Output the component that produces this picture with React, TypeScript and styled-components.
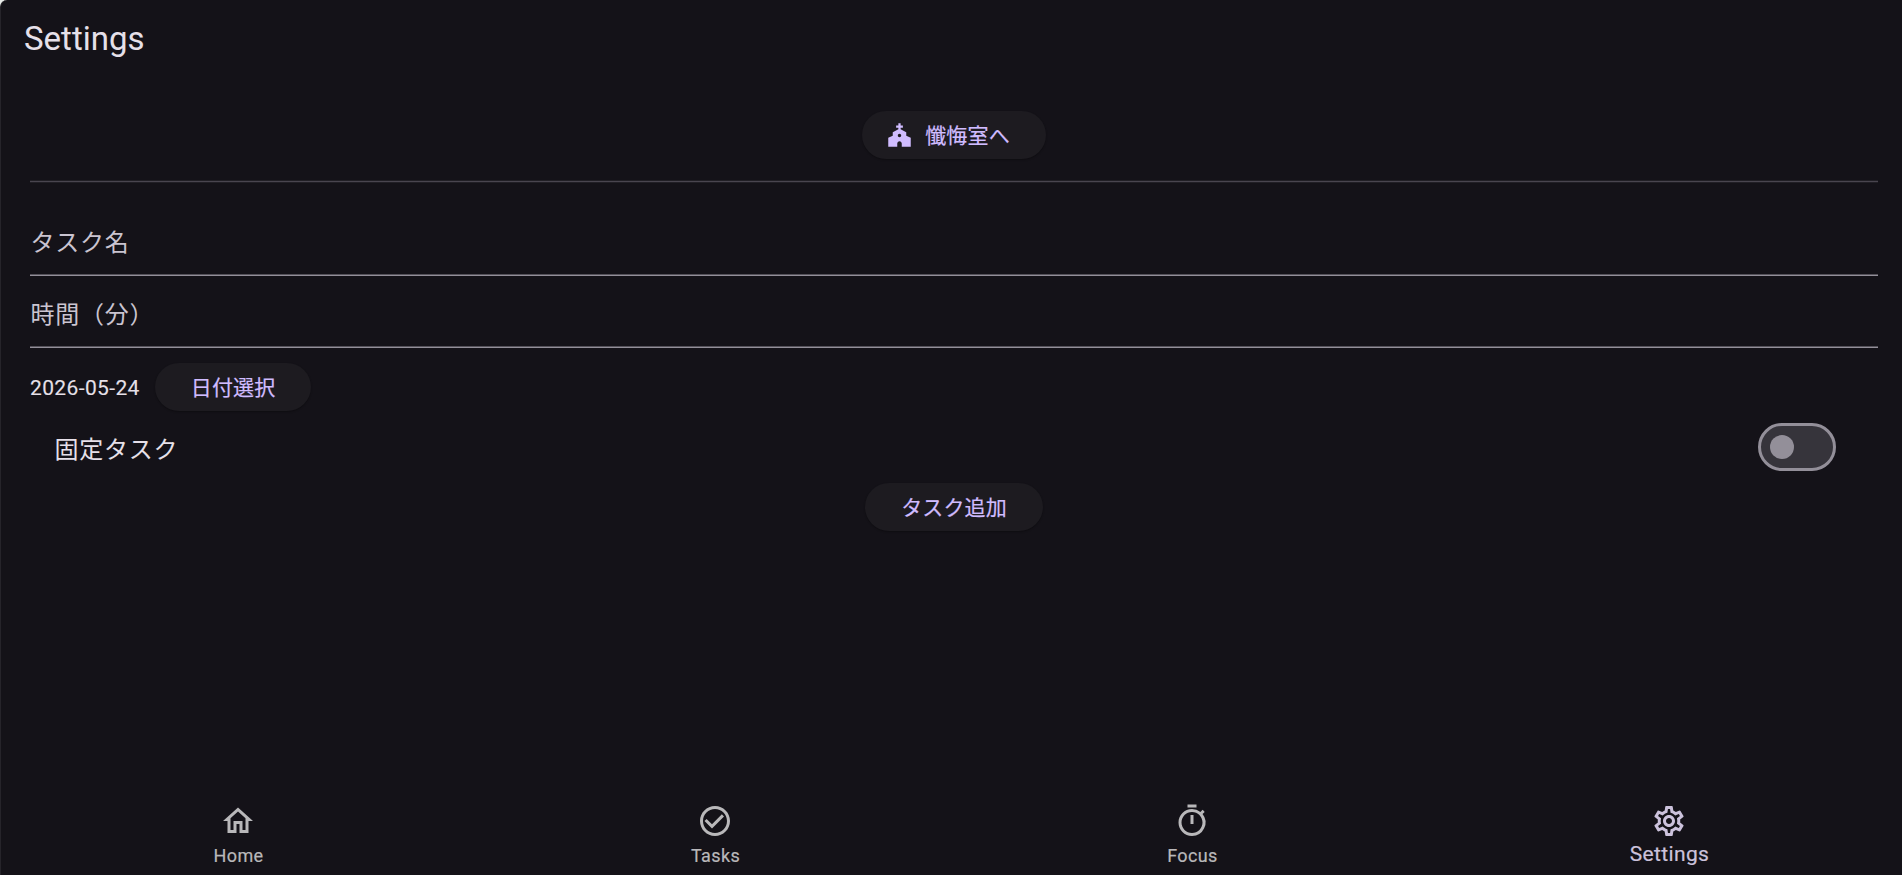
import React, { useState } from "react";
import styled, { createGlobalStyle } from "styled-components";
import { IconType } from "react-icons";
import {
  MdCheckCircleOutline,
  MdChurch,
  MdOutlineHome,
  MdOutlineSettings,
  MdOutlineTimer,
} from "react-icons/md";

const Colors = {
  surface: "#141218",
  surfaceLow: "#1d1b20",
  text: "#e6e0e9",
  textVariant: "#cac4d0",
  primary: "#d0bcff",
  outline: "#938f99",
  outlineSoft: "#545159",
  outlineVariant: "#49454f",
  outlineVariantSoft: "#211f25",
  track: "#36343b",
  edge: "#26242a",
  navIdle: "#b9b8ba",
  navActive: "#ccc2dc",
};

interface Tab {
  label: string;
  icon: IconType;
}

const tabs: Tab[] = [
  { label: "Home", icon: MdOutlineHome },
  { label: "Tasks", icon: MdCheckCircleOutline },
  { label: "Focus", icon: MdOutlineTimer },
  { label: "Settings", icon: MdOutlineSettings },
];

const App: React.FC = () => {
  const [active, setActive] = useState("Settings");
  const [fixed, setFixed] = useState(false);

  return (
    <>
      <GlobalStyle />
      <Window>
        <Screen>
          <AppBar>Settings</AppBar>

          <Content>
            <CenterRow>
              <PillButton $icon>
                <MdChurch size={27} />
                <PillText>懺悔室へ</PillText>
              </PillButton>
            </CenterRow>

            <Divider />

            <Field placeholder="タスク名" />
            <Field placeholder="時間（分）" />

            <DateRow>
              <DateText>2026-05-24</DateText>
              <PillButton>
                <PillText>日付選択</PillText>
              </PillButton>
            </DateRow>

            <SwitchRow>
              <SwitchLabel>固定タスク</SwitchLabel>
              <Switch $on={fixed} onClick={() => setFixed(!fixed)}>
                <Thumb />
              </Switch>
            </SwitchRow>

            <CenterRow>
              <PillButton>
                <PillText>タスク追加</PillText>
              </PillButton>
            </CenterRow>
          </Content>

          <NavBar>
            {tabs.map(({ label, icon: Icon }) => (
              <NavItem key={label} $active={label === active} onClick={() => setActive(label)}>
                <Icon size={36} />
                <NavLabel $active={label === active}>{label}</NavLabel>
              </NavItem>
            ))}
          </NavBar>
        </Screen>
      </Window>
    </>
  );
};

export default App;

const GlobalStyle = createGlobalStyle`
  * {
    box-sizing: border-box;
  }

  body {
    margin: 0;
    background-color: #e8ebe8;
    font-family: Roboto, "Noto Sans CJK JP", sans-serif;
    color: ${Colors.text};
  }

  button, input {
    font-family: inherit;
  }
`;

const Window = styled.div`
  height: 100vh;
  overflow: hidden;
  background-color: ${Colors.surface};
  border-left: 1px solid ${Colors.edge};
  border-top-left-radius: 7px;
`;

const Screen = styled.div`
  display: flex;
  flex-direction: column;
  width: 1908px;
  height: 100%;
  margin-left: -1px;
`;

const AppBar = styled.header`
  height: 84px;
  padding: 18px 24px 0;
  font-size: 33px;
  line-height: 42px;
`;

const Content = styled.main`
  display: flex;
  flex-direction: column;
  flex: 1;
  padding: 27px 30px 0;
`;

const CenterRow = styled.div`
  display: flex;
  justify-content: center;
`;

const PillButton = styled.button<{ $icon?: boolean }>`
  display: flex;
  align-items: center;
  gap: 12px;
  height: 48px;
  padding: ${({ $icon }) => ($icon ? "0 36px 0 24px" : "0 36px")};
  border: 0;
  border-radius: 24px;
  background-color: ${Colors.surfaceLow};
  box-shadow: 0 1px 2px rgba(0, 0, 0, 0.3);
  color: ${Colors.primary};
`;

const PillText = styled.span`
  padding-top: 2px;
  font-size: 21px;
  line-height: 30px;
  letter-spacing: 0.15px;
  -webkit-text-stroke: 0.2px;
`;

const Divider = styled.div`
  height: 1px;
  margin: 22px 0;
  background-color: ${Colors.outlineVariant};
  box-shadow: 0 -1px ${Colors.outlineVariantSoft}, 0 1px ${Colors.outlineVariantSoft};
`;

const Field = styled.input`
  height: 72px;
  padding: 7px 0 0 0.5px;
  border: 0;
  border-bottom: 1px solid ${Colors.outline};
  outline: 0;
  background: transparent;
  box-shadow: inset 0 -1px ${Colors.outlineSoft};
  color: ${Colors.text};
  font-size: 24px;
  letter-spacing: 0.75px;

  &::placeholder {
    color: ${Colors.textVariant};
    opacity: 1;
  }
`;

const DateRow = styled.div`
  display: flex;
  align-items: center;
  gap: 15px;
  margin-top: 15px;
`;

const DateText = styled.span`
  padding-top: 2px;
  font-size: 21px;
  letter-spacing: 0.375px;
  -webkit-text-stroke: 0.1px;
`;

const SwitchRow = styled.div`
  display: flex;
  align-items: center;
  justify-content: space-between;
  height: 72px;
  padding: 0 42px 0 24.5px;
`;

const SwitchLabel = styled.span`
  font-size: 24px;
  letter-spacing: 0.75px;
`;

const Switch = styled.button<{ $on: boolean }>`
  display: flex;
  align-items: center;
  justify-content: ${({ $on }) => ($on ? "flex-end" : "flex-start")};
  width: 78px;
  height: 48px;
  padding: 0 9px;
  border: 3px solid ${Colors.outline};
  border-radius: 24px;
  background-color: ${Colors.track};
`;

const Thumb = styled.div`
  width: 24px;
  height: 24px;
  border-radius: 50%;
  background-color: ${Colors.outline};
`;

const NavBar = styled.nav`
  display: grid;
  grid-template-columns: repeat(4, 1fr);
  height: 84px;
`;

const NavItem = styled.button<{ $active: boolean }>`
  display: flex;
  flex-direction: column;
  align-items: center;
  padding: 12px 0.5px 0 0;
  border: 0;
  background: transparent;
  color: ${({ $active }) => ($active ? Colors.navActive : Colors.navIdle)};
`;

const NavLabel = styled.span<{ $active: boolean }>`
  margin-top: ${({ $active }) => ($active ? "1px" : "4px")};
  padding-left: 0.5px;
  font-size: ${({ $active }) => ($active ? "21px" : "18px")};
  line-height: ${({ $active }) => ($active ? "28px" : "26px")};
  letter-spacing: 0.375px;
  -webkit-text-stroke: 0.2px;
`;
